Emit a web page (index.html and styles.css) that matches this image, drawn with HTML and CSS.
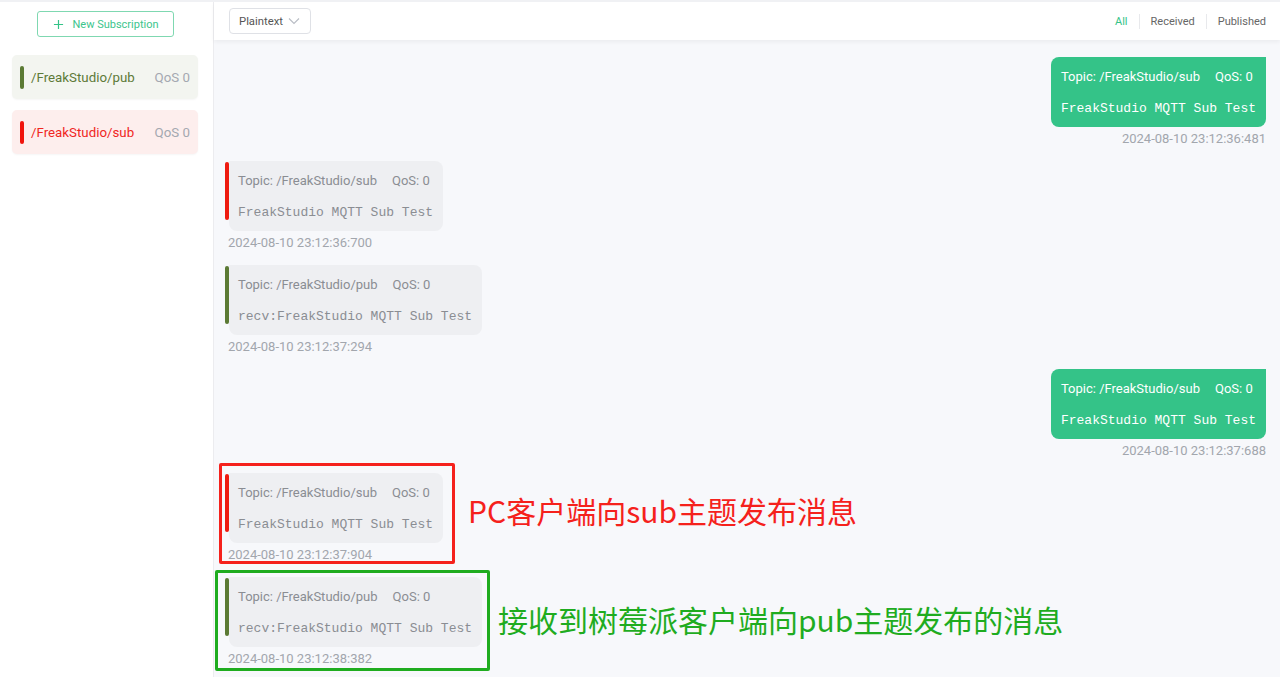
FILE: index.html
```html
<!DOCTYPE html>
<html>
<head>
  <meta charset="utf-8">
  <title>MQTT Client</title>
  <link rel="stylesheet" href="styles.css">
</head>
<body>
  <div class="app">
    <aside class="sidebar">
      <button class="new-sub">
        <svg width="11" height="11" viewBox="0 0 12 12"><path d="M6 1v10M1 6h10" stroke="#34c388" stroke-width="1.3" fill="none"/></svg>
        New Subscription
      </button>
      <div class="sub-item pub">
        <span class="sub-bar"></span>
        <span class="sub-topic">/FreakStudio/pub</span>
        <span class="sub-qos">QoS 0</span>
      </div>
      <div class="sub-item sub">
        <span class="sub-bar"></span>
        <span class="sub-topic">/FreakStudio/sub</span>
        <span class="sub-qos">QoS 0</span>
      </div>
    </aside>

    <main class="main">
      <header class="toolbar">
        <div class="select">
          Plaintext
          <svg width="12" height="8" viewBox="0 0 12 8"><path d="M1 1.5l5 5 5-5" stroke="#b8bcc4" stroke-width="1.1" fill="none"/></svg>
        </div>
        <nav class="tabs">
          <a class="tab active">All</a>
          <span class="sep"></span>
          <a class="tab">Received</a>
          <span class="sep"></span>
          <a class="tab">Published</a>
        </nav>
      </header>

      <section class="messages">
        <div class="msg out">
          <div class="bubble">
            <div class="meta"><span>Topic: /FreakStudio/sub</span><span>QoS: 0</span></div>
            <div class="payload">FreakStudio MQTT Sub Test</div>
          </div>
          <div class="time">2024-08-10 23:12:36:481</div>
        </div>

        <div class="msg in red">
          <div class="row">
            <span class="bar"></span>
            <div class="bubble">
              <div class="meta"><span>Topic: /FreakStudio/sub</span><span>QoS: 0</span></div>
              <div class="payload">FreakStudio MQTT Sub Test</div>
            </div>
          </div>
          <div class="time">2024-08-10 23:12:36:700</div>
        </div>

        <div class="msg in olive">
          <div class="row">
            <span class="bar"></span>
            <div class="bubble">
              <div class="meta"><span>Topic: /FreakStudio/pub</span><span>QoS: 0</span></div>
              <div class="payload">recv:FreakStudio MQTT Sub Test</div>
            </div>
          </div>
          <div class="time">2024-08-10 23:12:37:294</div>
        </div>

        <div class="msg out">
          <div class="bubble">
            <div class="meta"><span>Topic: /FreakStudio/sub</span><span>QoS: 0</span></div>
            <div class="payload">FreakStudio MQTT Sub Test</div>
          </div>
          <div class="time">2024-08-10 23:12:37:688</div>
        </div>

        <div class="msg in red">
          <div class="row">
            <span class="bar"></span>
            <div class="bubble">
              <div class="meta"><span>Topic: /FreakStudio/sub</span><span>QoS: 0</span></div>
              <div class="payload">FreakStudio MQTT Sub Test</div>
            </div>
          </div>
          <div class="time">2024-08-10 23:12:37:904</div>
        </div>

        <div class="msg in olive">
          <div class="row">
            <span class="bar"></span>
            <div class="bubble">
              <div class="meta"><span>Topic: /FreakStudio/pub</span><span>QoS: 0</span></div>
              <div class="payload">recv:FreakStudio MQTT Sub Test</div>
            </div>
          </div>
          <div class="time">2024-08-10 23:12:38:382</div>
        </div>

        <!-- annotations drawn over the screenshot -->
        <div class="mark mark-red"></div>
        <div class="note note-red">PC客户端向sub主题发布消息</div>
        <div class="mark mark-green"></div>
        <div class="note note-green">接收到树莓派客户端向pub主题发布的消息</div>
      </section>
    </main>
  </div>
</body>
</html>
```

FILE: styles.css
```css
* { box-sizing: border-box; }

html, body {
    margin: 0;
    height: 100%;
}

body {
    font-family: Roboto, "Noto Sans", "Liberation Sans", sans-serif;
    background: #f7f8fb;
    border-top: 2px solid #f0f1f4;
    overflow: hidden;
}

.app {
    display: flex;
    height: 675px;
}

/* sidebar */
.sidebar {
    width: 214px;
    flex: none;
    background: #fff;
    border-right: 1px solid #ececef;
    padding: 9px 15px 0 12px;
    display: flex;
    flex-direction: column;
    gap: 11px;
}

.new-sub {
    align-self: center;
    margin: 0 0 7px 0;
    width: 137px;
    height: 26px;
    border: 1px solid #7fd8b1;
    border-radius: 3px;
    background: #fff;
    color: #3cc58d;
    font-family: inherit;
    font-size: 11px;
    display: flex;
    align-items: center;
    justify-content: center;
    gap: 8px;
    padding: 0 0 0 2px;
}

.sub-item {
    height: 44px;
    border-radius: 5px;
    display: flex;
    align-items: center;
    padding: 0 8px 0 8px;
    font-size: 13.3px;
    box-shadow: 0 1px 2px rgba(0,0,0,0.04);
}
.sub-item.pub { background: #f3f5f0; color: #5d7a38; }
.sub-item.sub { background: #fdeeed; color: #f0261e; }

.sub-bar {
    width: 4px;
    height: 23px;
    border-radius: 2px;
    margin-right: 7px;
}
.pub .sub-bar { background: #5b7a34; }
.sub .sub-bar { background: #f0140d; }

.sub-topic { flex: 1; }
.sub-qos { color: #a4a8b0; }

/* main column */
.main {
    flex: 1;
    display: flex;
    flex-direction: column;
    min-width: 0;
}

.toolbar {
    height: 38px;
    flex: none;
    background: #fff;
    box-shadow: 0 2px 4px rgba(0,0,0,0.05);
    display: flex;
    align-items: center;
    justify-content: space-between;
    padding: 0 14px 0 15px;
    position: relative;
    z-index: 1;
}

.select {
    width: 82px;
    height: 26px;
    border: 1px solid #dfe1e6;
    border-radius: 4px;
    font-size: 11.3px;
    color: #555;
    display: flex;
    align-items: center;
    justify-content: space-between;
    padding: 0 10px 0 9px;
}

.tabs {
    display: flex;
    align-items: center;
    font-size: 11px;
    color: #666;
}
.tab { padding: 0 11px; }
.tab:last-child { padding-right: 0; }
.tab.active { color: #34c388; padding-left: 0; }
.sep {
    width: 1px;
    height: 15px;
    background: #e8e9ec;
}

/* messages */
.messages {
    flex: 1;
    position: relative;
    padding: 17px 14px 0 11px;
    display: flex;
    flex-direction: column;
    gap: 12px;
}

.msg {
    display: flex;
    flex-direction: column;
}
.msg.out { align-items: flex-end; }
.msg.in { align-items: flex-start; }

.row { display: flex; }

.bar {
    width: 4px;
    height: 58px;
    margin-top: 1px;
    border-radius: 2px;
}
.red .bar { background: #ee1b10; }
.olive .bar { background: #5b7a34; }

.bubble {
    height: 70px;
    border-radius: 8px;
    padding: 10px 10px 0 10px;
    font-size: 13px;
}
.out .bubble {
    background: #34c388;
    color: #fff;
    border-top-right-radius: 0;
}
.in .bubble {
    background: #eeeff2;
    color: #8a8d93;
    border-top-left-radius: 0;
    padding-left: 9px;
}

.meta {
    display: flex;
    gap: 15px;
    line-height: 20px;
}

.payload {
    font-family: "Liberation Mono", monospace;
    font-size: 13px;
    line-height: 20px;
    margin-top: 12px;
    white-space: nowrap;
}

.time {
    font-size: 13px;
    color: #a2a6ad;
    line-height: 20px;
    padding-top: 2px;
}
.in .time { padding-left: 3px; }

/* annotation overlay */
.mark {
    position: absolute;
    border: 3px solid;
}
.mark-red {
    border-color: #f5211c;
    left: 5px;
    top: 423px;
    width: 236px;
    height: 101px;
    border-radius: 2px;
}
.mark-green {
    border-color: #1fac1f;
    left: 1px;
    top: 530px;
    width: 275px;
    height: 101px;
    border-radius: 2px;
}

.note {
    position: absolute;
    font-family: "Noto Sans CJK SC", sans-serif;
    font-size: 30px;
    line-height: 36px;
    white-space: nowrap;
}
.note-red { color: #f5211c; left: 254px; top: 452px; }
.note-green { color: #1fac1f; left: 284px; top: 561px; }
```
